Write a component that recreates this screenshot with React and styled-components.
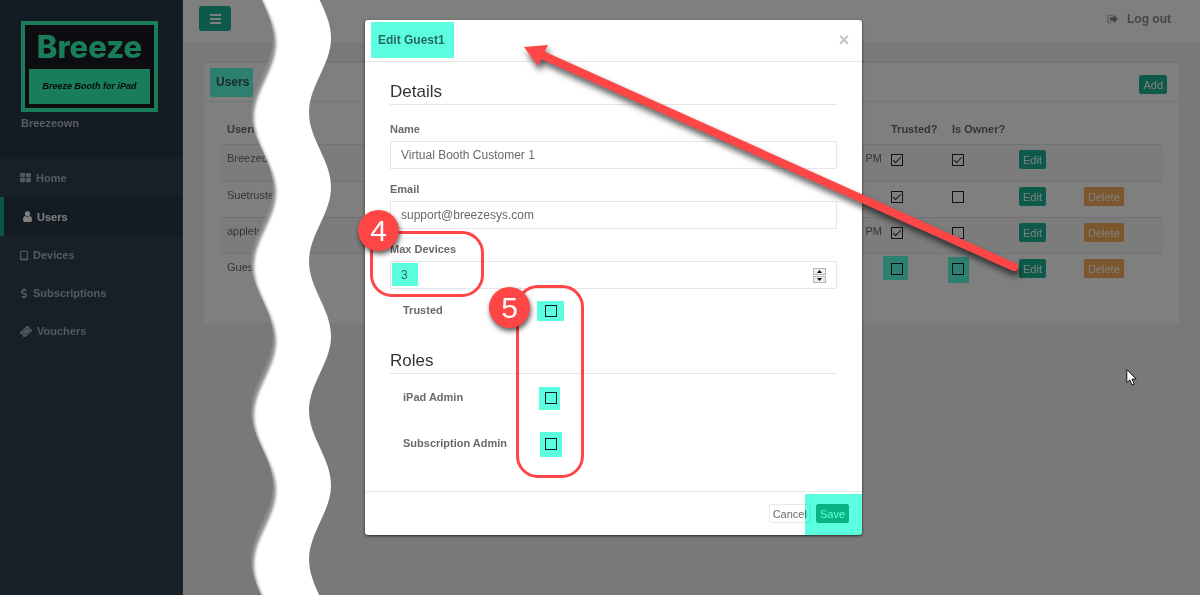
import React from 'react';
import styled, { createGlobalStyle, css } from 'styled-components';
import { FaDollarSign } from 'react-icons/fa';

const GlobalStyle = createGlobalStyle`
  * { box-sizing: border-box; }
  body {
    margin: 0;
    font-family: "Liberation Sans", Arial, sans-serif;
    font-size: 11px;
    line-height: 14px;
    color: #676a6c;
    background: #f3f3f4;
  }
  button, input { font-family: inherit; }
`;

const Page = styled.div`
  display: flex;
  min-height: 100vh;
`;

/* ---------- sidebar ---------- */

const Sidebar = styled.aside`
  flex: 0 0 183px;
  background: #2f4050;
  border-right: 1px solid #3c4c5c;
`;

const Brand = styled.div`
  height: 158px;
  padding: 21px 20px 0 21px;
  background: #263849;
  color: #dfe4ed;
  font-weight: bold;
`;

const Logo = styled.div`
  display: flex;
  flex-direction: column;
  width: 137px;
  height: 91px;
  margin-bottom: 4px;
  padding: 0 4px 4px;
  border: 4px solid #30fab0;
  background: #191923;
`;

const Wordmark = styled.div`
  flex: 1;
  color: #30fab0;
  font: 800 31px/44px Inter, "Liberation Sans", sans-serif;
  text-align: center;
`;

const Tagline = styled.div`
  height: 35px;
  background: #30fab0;
  color: #101010;
  font-size: 9px;
  font-style: italic;
  line-height: 35px;
  text-align: center;
`;

const BrandName = styled.div`
  color: #b4bac4;
`;

const NavLink = styled.a`
  display: flex;
  align-items: center;
  gap: 5px;
  height: 38px;
  padding-left: ${(p) => (p.$active ? 19 : 20)}px;
  border-left: ${(p) => (p.$active ? '4px solid #19aa8d' : '0')};
  background: ${(p) => (p.$active ? '#293846' : 'transparent')};
  color: ${(p) => (p.$active ? '#ffffff' : '#a7b1c2')};
  font-weight: bold;
  text-decoration: none;
  &:nth-child(-n + 2) { height: 39px; }
`;

/* ---------- main area ---------- */

const Main = styled.main`
  flex: 1;
  min-width: 0;
`;

const TopBar = styled.header`
  display: flex;
  align-items: center;
  justify-content: space-between;
  padding: 6px 29px 12px 16px;
  border-bottom: 1px solid #e7eaec;
  background: #ffffff;
`;

const MenuButton = styled.button`
  display: flex;
  align-items: center;
  justify-content: center;
  width: 32px;
  height: 25px;
  padding: 0;
  border: 0;
  border-radius: 3px;
  background: #1ab394;
  color: #ffffff;
`;

const LogoutLink = styled.a`
  display: flex;
  align-items: center;
  gap: 8px;
  color: #8a8d90;
  font-size: 12px;
  font-weight: bold;
  text-decoration: none;
`;

const Card = styled.section`
  margin: 17px 21px 0;
  border-top: 2px solid #e7eaec;
  background: #ffffff;
`;

const CardHeader = styled.div`
  display: flex;
  align-items: center;
  justify-content: space-between;
  padding: 5px 12px 4px 6px;
  border-bottom: 1px solid #e7eaec;
`;

const CardActions = styled.div`
  padding-top: 4px;
`;

const CardTitle = styled.h5`
  margin: 0;
  padding: 0 4px 0 6px;
  background: #5bffe0;
  color: #2f5d58;
  font-size: 12px;
  line-height: 29px;
`;

const CardBody = styled.div`
  padding: 10px 17px 34px 16px;
`;

const buttonTones = {
  primary: css`
    border-color: #1ab394;
    background: #1ab394;
    color: #ffffff;
  `,
  warning: css`
    border-color: #f8ac59;
    background: #f8ac59;
    color: #ffffff;
  `,
  plain: css`
    border-color: #e7eaec;
    background: #ffffff;
    color: #676a6c;
  `,
};

const Button = styled.button`
  display: block;
  height: 19px;
  padding: 0 3px;
  border: 1px solid;
  border-radius: 2px;
  font-size: 11px;
  line-height: 16px;
  ${(p) => buttonTones[p.$tone || 'primary']}
`;

const Table = styled.table`
  width: 100%;
  border-collapse: separate;
  border-spacing: 0;
  table-layout: fixed;
`;

const Th = styled.th`
  width: ${(p) => p.$width || 'auto'};
  height: 32px;
  padding: 1px 7px 0;
  text-align: left;
  white-space: nowrap;
`;

const Tr = styled.tr`
  background: ${(p) => (p.$striped ? '#f9f9f9' : 'transparent')};
`;

const Td = styled.td`
  height: ${(p) => (p.$tall ? 37 : 36)}px;
  padding: ${(p) => (p.$end ? '6px 2px 0 0' : '6px 7px 0')};
  border-top: 1px solid #e3e5e7;
  text-align: ${(p) => (p.$end ? 'right' : 'left')};
  vertical-align: top;
  white-space: nowrap;
`;

const ActionTd = styled(Td)`
  padding-top: 5px;
`;

const TickWrap = styled.span`
  position: relative;
  display: block;
  width: 12px;
  height: 12px;
  margin-top: ${(p) => (p.$inTable ? 3 : 0)}px;
`;

const Tick = styled.input`
  display: block;
  width: 12px;
  height: 12px;
  margin: 0;
  border: 1px solid #222222;
  background: #ffffff;
  appearance: none;
  &:checked::after {
    content: '';
    display: block;
    width: 7px;
    height: 3px;
    margin: 2px 0 0 1px;
    border: solid #222222;
    border-width: 0 0 1px 1px;
    transform: rotate(-45deg);
  }
`;

/* A highlighter stroke laid over a control. */
const Mark = styled.span`
  position: absolute;
  inset: ${(p) => p.$inset};
  width: ${(p) => (p.$width ? `${p.$width}px` : 'auto')};
  background: #5bffe0;
  mix-blend-mode: multiply;
  pointer-events: none;
`;

/* ---------- dialog ---------- */

const Backdrop = styled.div`
  position: fixed;
  inset: 0;
  display: flex;
  align-items: flex-start;
  justify-content: center;
  padding: 20px 0 0 27px;
  background: rgba(0, 0, 0, 0.5);
`;

const Tear = styled.svg`
  position: absolute;
  top: 0;
  left: 240px;
  width: 100px;
  height: 100%;
`;

const Dialog = styled.div`
  position: relative;
  width: 497px;
  border-radius: 3px;
  background: #ffffff;
  box-shadow: 0 1px 3px rgba(0, 0, 0, 0.7);
`;

const DialogHeader = styled.div`
  display: flex;
  align-items: center;
  justify-content: space-between;
  padding: 2px 12px 3px 6px;
  border-bottom: 1px solid #e5e5e5;
`;

const DialogTitle = styled.h4`
  margin: 0;
  padding: 0 9px 0 7px;
  background: #5bffe0;
  color: #28675f;
  font-size: 12px;
  line-height: 36px;
`;

const CloseButton = styled.button`
  padding: 0;
  width: 12px;
  border: 0;
  background: none;
  color: #c4c4c4;
  font-size: 18px;
  font-weight: bold;
  line-height: 16px;
`;

const Form = styled.form`
  margin: 0;
`;

const DialogBody = styled.div`
  padding: 20px 25px 37px;
`;

const SectionTitle = styled.h3`
  margin: ${(p) => (p.$spaced ? '30px 0 14px' : '0 0 17px')};
  padding-bottom: 2px;
  border-bottom: 1px solid #e5e5e5;
  color: #333333;
  font-size: 17px;
  font-weight: normal;
  line-height: 20px;
`;

const Field = styled.div`
  margin-bottom: ${(p) => (p.$last ? 12 : 13)}px;
`;

const Label = styled.label`
  display: block;
  font-weight: bold;
`;

const TickLabel = styled(Label)`
  padding-bottom: 2px;
`;

const InputWrap = styled.div`
  position: relative;
  margin-top: 5px;
`;

const Input = styled.input`
  display: block;
  width: 100%;
  height: 28px;
  padding: 0 10px;
  border: 1px solid #e5e6e7;
  background: #ffffff;
  color: #676a6c;
  font-size: 12px;
  appearance: textfield;
  &::-webkit-inner-spin-button { appearance: none; }
`;

const Spinner = styled.span`
  position: absolute;
  top: 7px;
  right: 11px;
  display: grid;
  gap: 1px;
`;

const SpinButton = styled.button`
  display: flex;
  align-items: center;
  justify-content: center;
  width: 13px;
  height: 7px;
  padding: 0;
  border: 1px solid #b5b5b5;
  background: #eeeeee;
`;

const TickRows = styled.div`
  display: grid;
  gap: 26px;
`;

const TickRow = styled.div`
  display: grid;
  grid-template-columns: 142px auto;
  align-items: center;
  height: 20px;
  padding-left: 13px;
`;

const DialogFooter = styled.div`
  position: relative;
  display: flex;
  justify-content: flex-end;
  gap: 5px;
  padding: 12px 13px;
  border-top: 1px solid #e5e5e5;
`;

/* ---------- tutorial call-outs ---------- */

const Callout = styled.div`
  position: absolute;
  top: ${(p) => p.$top}px;
  left: ${(p) => p.$left}px;
  width: ${(p) => p.$width}px;
  height: ${(p) => p.$height}px;
  border: 3px solid #ff4646;
  border-radius: 22px;
  pointer-events: none;
`;

const Badge = styled.span`
  position: absolute;
  top: ${(p) => p.$top}px;
  left: ${(p) => p.$left}px;
  width: 41px;
  height: 41px;
  border-radius: 50%;
  background: #ff4646;
  box-shadow: 1px 3px 5px rgba(0, 0, 0, 0.65);
  color: #ffffff;
  font-size: 30px;
  line-height: 41px;
  text-align: center;
`;

const Arrow = styled.svg`
  position: absolute;
  top: 20px;
  left: 153px;
  overflow: visible;
  pointer-events: none;
  filter: drop-shadow(2px 5px 3px rgba(0, 0, 0, 0.65));
`;

const Pointer = styled.svg`
  position: absolute;
  top: 368px;
  right: 62px;
`;

/* ---------- icons ---------- */

const Glyph = ({ d, width, height, box = '0 0 1792 1792' }) => (
  <svg width={width} height={height} viewBox={box} fill="currentColor" aria-hidden="true">
    <path d={d} />
  </svg>
);

const GRID =
  'M832 1024v384q0 52-38 90t-90 38h-512q-52 0-90-38t-38-90v-384q0-52 38-90t90-38h512q52 0 90 38t38 90zm0-768v384q0 52-38 90t-90 38h-512q-52 0-90-38t-38-90v-384q0-52 38-90t90-38h512q52 0 90 38t38 90zm896 768v384q0 52-38 90t-90 38h-512q-52 0-90-38t-38-90v-384q0-52 38-90t90-38h512q52 0 90 38t38 90zm0-768v384q0 52-38 90t-90 38h-512q-52 0-90-38t-38-90v-384q0-52 38-90t90-38h512q52 0 90 38t38 90z';
const PERSON =
  'M1536 1399q0 109-62.5 187t-150.5 78h-854q-88 0-150.5-78t-62.5-187q0-85 8.5-160.5t31.5-152 58.5-131 94-89 134.5-34.5q131 128 313 128t313-128q76 0 134.5 34.5t94 89 58.5 131 31.5 152 8.500 160.500zm-256-887q0 159-112.5 271.5t-271.5 112.5-271.5-112.5-112.5-271.5 112.5-271.5 271.5-112.5 271.5 112.5 112.5 271.5z';
const SIGN_OUT =
  'M704 1440q0 4 1 20t.5 26.5-3 23.5-10 19.5-20.5 6.5h-320q-119 0-203.5-84.5t-84.5-203.5v-704q0-119 84.5-203.5t203.5-84.5h320q13 0 22.5 9.5t9.5 22.5q0 4 1 20t.5 26.5-3 23.5-10 19.5-20.5 6.5h-320q-66 0-113 47t-47 113v704q0 66 47 113t113 47h312l11.5 1 11.5 3 8 5.5 7 9 2 13.5zm928-544q0 26-19 45l-544 544q-19 19-45 19t-45-19-19-45v-288h-448q-26 0-45-19t-19-45v-384q0-26 19-45t45-19h448v-288q0-26 19-45t45-19 45 19l544 544q19 19 19 45z';

const DollarIcon = styled(FaDollarSign)`
  width: 8px;
  height: 11px;
`;

const TabletIcon = () => (
  <svg width="8" height="11" viewBox="0 0 8 11" aria-hidden="true">
    <rect x="0.6" y="1.1" width="6.8" height="8.8" rx="1" fill="none" stroke="currentColor" strokeWidth="1.2" />
    <path d="M1 8.9h6" stroke="currentColor" strokeWidth="1" />
  </svg>
);

const TicketIcon = () => (
  <svg width="12" height="11" viewBox="0 0 12 11" aria-hidden="true">
    <g transform="rotate(-42 6 5.5)">
      <path d="M.6 2h10.8v2.300a1.300 1.300 0 0 0 0 2.400v2.300H.6V6.700a1.300 1.300 0 0 0 0-2.400z" fill="currentColor" />
      <rect x="3" y="3.600" width="6" height="3.800" fill="none" stroke="#2f4050" strokeWidth="0.5" />
    </g>
  </svg>
);

const MenuIcon = () => (
  <svg width="11" height="10" viewBox="0 0 11 10" aria-hidden="true">
    <path d="M0 1h11M0 5h11M0 9h11" stroke="currentColor" strokeWidth="1.8" />
  </svg>
);

/* ---------- torn strip geometry ---------- */

const HALF = 74.5;
const BEND = 27;

const wave = (near, far) => {
  let y = 38 - HALF * 2;
  let d = `${far} ${y}`;
  for (let i = 0; i < 30; i += 1) {
    const from = i % 2 ? near : far;
    const to = i % 2 ? far : near;
    d += ` C${from} ${y + BEND} ${to} ${y + HALF - BEND} ${to} ${y + HALF}`;
    y += HALF;
  }
  return { d, end: y };
};

const leftEdge = wave(11, 33);
const rightEdge = wave(69, 91);
const leftShape = `M${leftEdge.d} L200 ${leftEdge.end} L200 -111 Z`;
const rightShape = `M${rightEdge.d} L-50 ${rightEdge.end} L-50 -111 Z`;

const TornStrip = () => (
  <Tear aria-hidden="true">
    <defs>
      <clipPath id="tear-left"><path d={leftShape} /></clipPath>
      <clipPath id="tear-right"><path d={rightShape} /></clipPath>
      <filter id="tear-soft" x="-20%" width="140%"><feGaussianBlur stdDeviation="1.8" /></filter>
    </defs>
    <g clipPath="url(#tear-right)">
      <g clipPath="url(#tear-left)">
        <rect width="100" height="100%" fill="#8a8a8a" />
        <path d={leftShape} fill="#ffffff" transform="translate(3 5)" filter="url(#tear-soft)" />
      </g>
    </g>
  </Tear>
);

/* ---------- data ---------- */

const navItems = [
  { name: 'Home', icon: <Glyph d={GRID} width={11} height={10} box="64 128 1664 1536" /> },
  { name: 'Users', icon: <Glyph d={PERSON} width={9} height={11} box="256 128 1280 1536" />, active: true },
  { name: 'Devices', icon: <TabletIcon /> },
  { name: 'Subscriptions', icon: <DollarIcon /> },
  { name: 'Vouchers', icon: <TicketIcon /> },
];

const users = [
  { name: 'Breezeown', time: 'PM', trusted: true, owner: true },
  { name: 'Suetruste', time: '', trusted: true, owner: false, removable: true },
  { name: 'applete', time: '0 PM', trusted: true, owner: false, removable: true },
  { name: 'Guest', time: '', trusted: false, owner: false, removable: true, marked: true },
];

const roles = [
  { id: 'ipad-admin', name: 'iPad Admin', inset: '-5px -3px -6px -6px' },
  { id: 'subscription-admin', name: 'Subscription Admin', inset: '-6px -5px -7px -5px' },
];

function CheckBox({ inTable, mark, ...rest }) {
  return (
    <TickWrap $inTable={inTable}>
      <Tick type="checkbox" {...rest} />
      {mark && <Mark $inset={mark} />}
    </TickWrap>
  );
}

export default function App() {
  return (
    <>
      <GlobalStyle />
      <Page>
        <Sidebar>
          <Brand>
            <Logo>
              <Wordmark>Breeze</Wordmark>
              <Tagline>Breeze Booth for iPad</Tagline>
            </Logo>
            <BrandName>Breezeown</BrandName>
          </Brand>
          <nav>
            {navItems.map((item) => (
              <NavLink key={item.name} href="#" $active={item.active}>
                {item.icon}
                {item.name}
              </NavLink>
            ))}
          </nav>
        </Sidebar>
        <Main>
          <TopBar>
            <MenuButton type="button" aria-label="Toggle menu"><MenuIcon /></MenuButton>
            <LogoutLink href="#"><Glyph d={SIGN_OUT} width={12} height={12} />Log out</LogoutLink>
          </TopBar>
          <Card>
            <CardHeader>
              <CardTitle>Users</CardTitle>
              <CardActions><Button type="button">Add</Button></CardActions>
            </CardHeader>
            <CardBody>
              <Table>
                <thead>
                  <tr>
                    <Th>Username</Th>
                    <Th />
                    <Th $width="61px">Trusted?</Th>
                    <Th $width="67px">Is Owner?</Th>
                    <Th $width="65px" />
                    <Th $width="85px" />
                  </tr>
                </thead>
                <tbody>
                  {users.map((user, i) => (
                    <Tr key={user.name} $striped={i % 2 === 0}>
                      <Td $tall={i === 0}>{user.name}</Td>
                      <Td $end>{user.time}</Td>
                      <Td>
                        <CheckBox
                          inTable
                          aria-label={`${user.name} trusted`}
                          defaultChecked={user.trusted}
                          mark={user.marked && '-7px -5px -5px -8px'}
                        />
                      </Td>
                      <Td>
                        <CheckBox
                          inTable
                          aria-label={`${user.name} is owner`}
                          defaultChecked={user.owner}
                          mark={user.marked && '-6px -5px -8px -4px'}
                        />
                      </Td>
                      <ActionTd><Button type="button">Edit</Button></ActionTd>
                      <ActionTd>
                        {user.removable && <Button type="button" $tone="warning">Delete</Button>}
                      </ActionTd>
                    </Tr>
                  ))}
                </tbody>
              </Table>
            </CardBody>
          </Card>
        </Main>
      </Page>

      <Backdrop>
        <TornStrip />
        <Dialog role="dialog" aria-labelledby="dialog-title">
          <DialogHeader>
            <DialogTitle id="dialog-title">Edit Guest1</DialogTitle>
            <CloseButton type="button" aria-label="Close">×</CloseButton>
          </DialogHeader>
          <Form>
            <DialogBody>
              <SectionTitle>Details</SectionTitle>
              <Field>
                <Label htmlFor="name">Name</Label>
                <InputWrap><Input id="name" type="text" defaultValue="Virtual Booth Customer 1" /></InputWrap>
              </Field>
              <Field>
                <Label htmlFor="email">Email</Label>
                <InputWrap><Input id="email" type="email" defaultValue="support@breezesys.com" /></InputWrap>
              </Field>
              <Field $last>
                <Label htmlFor="devices">Max Devices</Label>
                <InputWrap>
                  <Input id="devices" type="number" defaultValue="3" />
                  <Mark $inset="2px auto 3px 2px" $width={26} />
                  <Spinner>
                    <SpinButton type="button" aria-label="Increase">
                      <svg width="5" height="3" viewBox="0 0 5 3"><path d="M0 3L2.500 0L5 3z" /></svg>
                    </SpinButton>
                    <SpinButton type="button" aria-label="Decrease">
                      <svg width="5" height="3" viewBox="0 0 5 3"><path d="M0 0h5L2.500 3z" /></svg>
                    </SpinButton>
                  </Spinner>
                </InputWrap>
              </Field>
              <TickRow>
                <TickLabel htmlFor="trusted">Trusted</TickLabel>
                <CheckBox id="trusted" mark="-4px -7px -4px -8px" />
              </TickRow>
              <SectionTitle $spaced>Roles</SectionTitle>
              <TickRows>
                {roles.map((role) => (
                  <TickRow key={role.id}>
                    <TickLabel htmlFor={role.id}>{role.name}</TickLabel>
                    <CheckBox id={role.id} mark={role.inset} />
                  </TickRow>
                ))}
              </TickRows>
            </DialogBody>
            <DialogFooter>
              <Button type="button" $tone="plain">Cancel</Button>
              <Button type="submit">Save</Button>
              <Mark $inset="2px 0 0 auto" $width={57} />
            </DialogFooter>
          </Form>

          <Callout $top={211} $left={5} $width={114} $height={66} />
          <Badge $top={190} $left={-7}>4</Badge>
          <Callout $top={265} $left={151} $width={68} $height={193} />
          <Badge $top={267} $left={124}>5</Badge>
          <Arrow width="510" height="240" viewBox="518 40 510 240" aria-hidden="true">
            <path d="M540 54L1014 267" stroke="#ff4646" strokeWidth="8" strokeLinecap="round" />
            <path d="M524 47L548 45L538 66z" fill="#ff4646" />
          </Arrow>
        </Dialog>
        <Pointer width="12" height="19" viewBox="0 0 12 19" aria-hidden="true">
          <path
            d="M.8 1.500v13.200l3-2.800 2.200 5.200 2.200-1-2.200-5h4.200z"
            fill="#ffffff"
            stroke="#111111"
            strokeWidth="1"
          />
        </Pointer>
      </Backdrop>
    </>
  );
}
